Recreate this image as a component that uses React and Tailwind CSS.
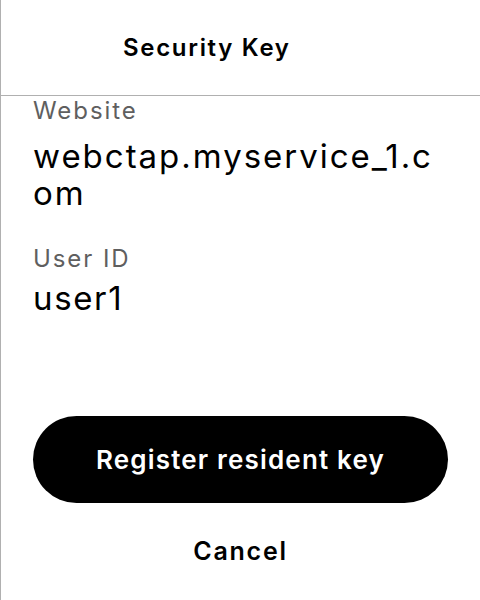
export default function App() {
  return (
    <div
      className="w-[480px] h-[600px] bg-white border-l border-[#b0b0b0] flex flex-col text-black overflow-hidden"
      style={{ fontFamily: "Inter, 'Noto Sans', sans-serif" }}
    >
      {/* Header */}
      <div className="h-[96px] shrink-0 border-b border-[#b0b0b0] flex items-center pl-[122px]">
        <h1 className="text-[24px] font-semibold leading-none tracking-[0.07em]">Security Key</h1>
      </div>

      {/* Details */}
      <div className="pl-[32px] pr-[40px] flex flex-col">
        <div className="text-[24px] leading-[29px] text-[#5f5f5f] tracking-[0.08em]">Website</div>
        <div className="mt-[13px] text-[33px] leading-[37px] tracking-[0.06em] break-all">
          webctap.myservice_1.com
        </div>
        <div className="mt-[32px] text-[24px] leading-[29px] text-[#5f5f5f] tracking-[0.08em]">
          User ID
        </div>
        <div className="mt-[7px] text-[33px] leading-[37px] tracking-[0.05em]">user1</div>
      </div>

      {/* Actions */}
      <div className="mt-auto px-[32px] pb-[33px] flex flex-col items-center">
        <button className="w-full h-[87px] rounded-full bg-black text-white text-[26px] font-semibold tracking-[0.045em]">
          Register resident key
        </button>
        <button className="mt-[32px] text-[25px] font-semibold leading-[32px] tracking-[0.07em]">
          Cancel
        </button>
      </div>
    </div>
  );
}
